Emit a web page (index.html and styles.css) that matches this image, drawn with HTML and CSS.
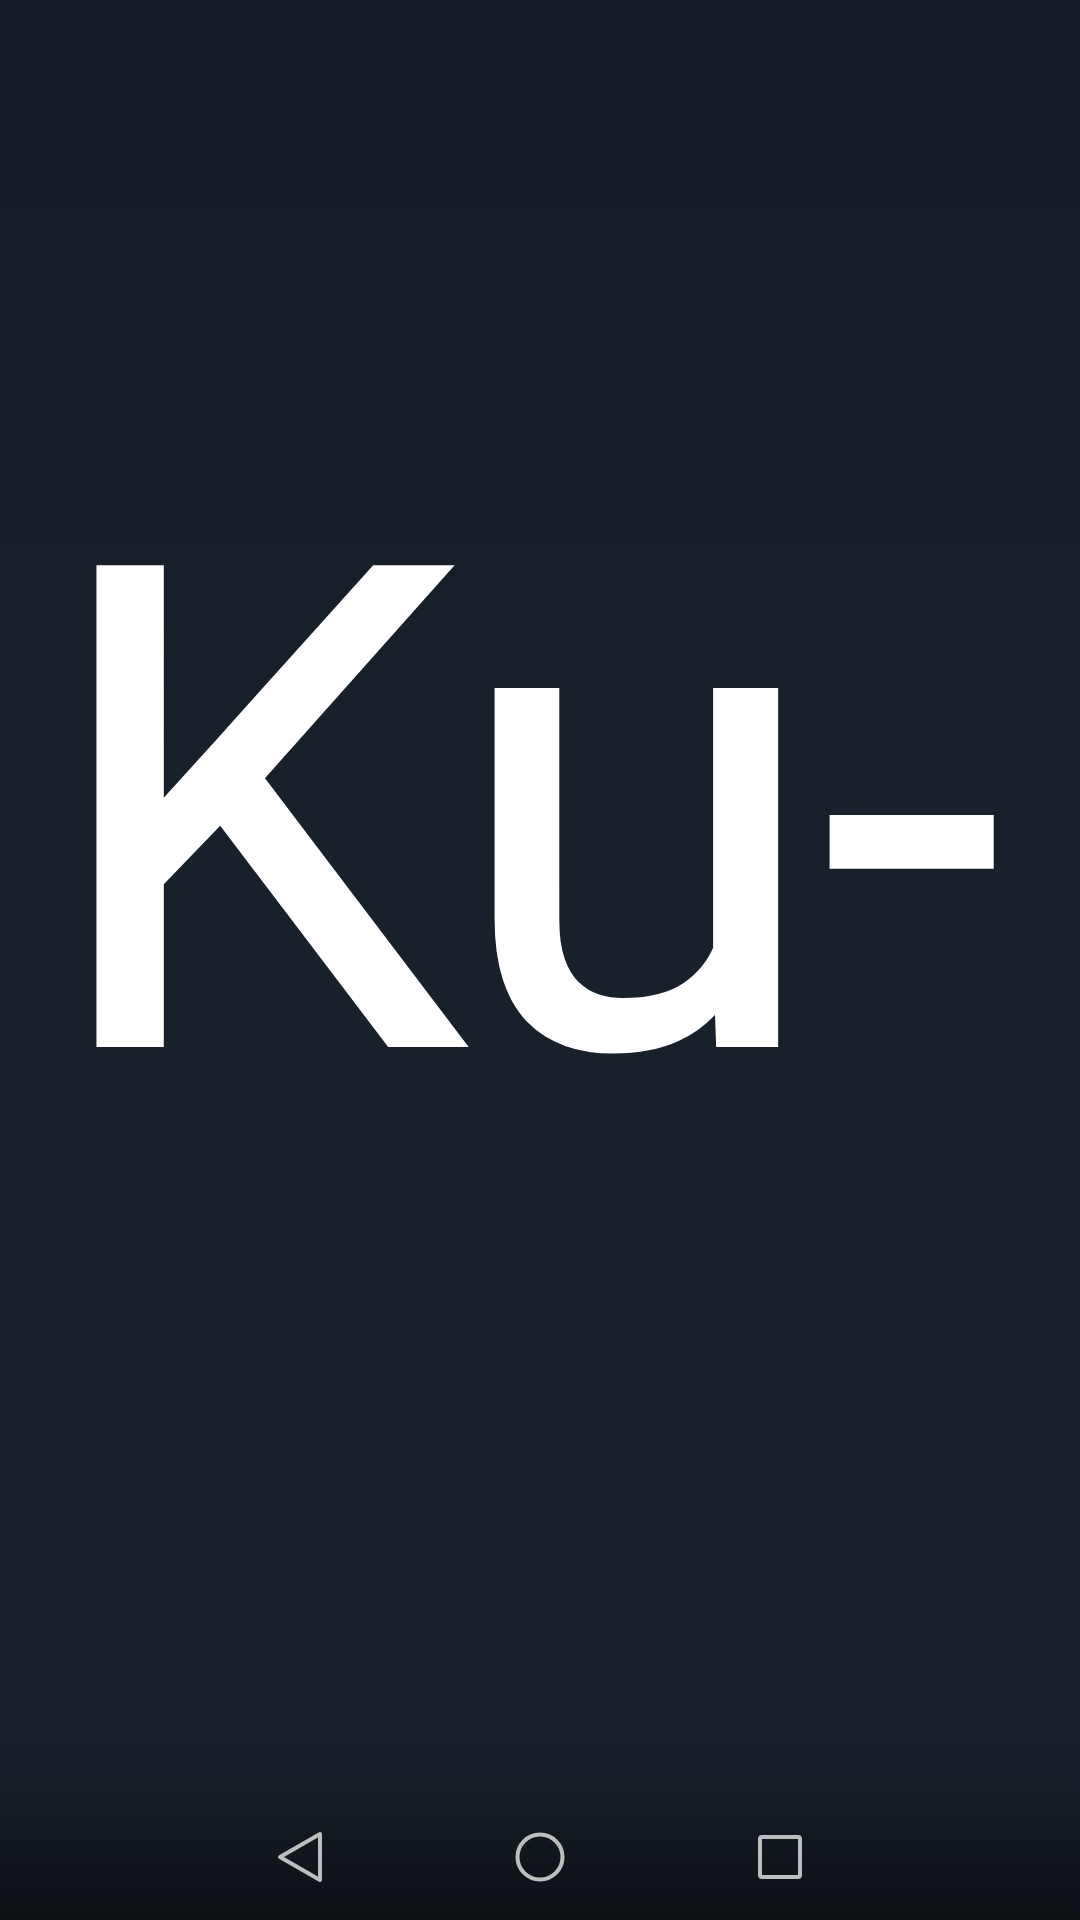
FILE: index.html
```html
<!DOCTYPE html>
<html lang="sv">
<head>
<meta charset="utf-8">
<title>Ku-</title>
<link rel="stylesheet" href="styles.css">
</head>
<body>
<div class="screen">
  <main class="content">
    <div class="word"><span class="k">K</span>u-</div>
  </main>
  <nav class="navbar">
    <svg class="nav-icon" width="60" height="60" viewBox="0 0 60 60" aria-label="Back">
      <path d="M50 7 L50 53 L10 30 Z" fill="none" stroke="#bdbdbd" stroke-width="4" stroke-linejoin="round"/>
    </svg>
    <svg class="nav-icon" width="60" height="60" viewBox="0 0 60 60" aria-label="Home">
      <circle cx="30" cy="30" r="22.5" fill="none" stroke="#bdbdbd" stroke-width="4"/>
    </svg>
    <svg class="nav-icon" width="60" height="60" viewBox="0 0 60 60" aria-label="Recents">
      <rect x="10" y="10" width="40" height="40" rx="2" fill="none" stroke="#bdbdbd" stroke-width="4"/>
    </svg>
  </nav>
</div>
</body>
</html>
```

FILE: styles.css
```css
html, body {
  margin: 0;
  padding: 0;
}

body {
  width: 1080px;
  height: 1920px;
  overflow: hidden;
  background: #18202b;
  font-family: Roboto, "Noto Sans", sans-serif;
}

.screen {
  display: flex;
  flex-direction: column;
  width: 1080px;
  height: 1920px;
  background: linear-gradient(180deg, #131b25 0%, #17202b 40%, #18212b 80%, #161e27 92%, #0d1116 100%);
}

.content {
  flex: 1;
  padding-top: 480px;
  padding-left: 43px;
}

.word {
  color: #ffffff;
  font-size: 672px;
  line-height: 1;
  font-weight: 400;
  white-space: nowrap;
  letter-spacing: -3px;
  -webkit-text-stroke: 4px #ffffff;
}

.k {
  margin-right: -10px;
}

.navbar {
  height: 126px;
  display: flex;
  justify-content: center;
  align-items: center;
  gap: 180px;
}

.nav-icon {
  display: block;
}
```
